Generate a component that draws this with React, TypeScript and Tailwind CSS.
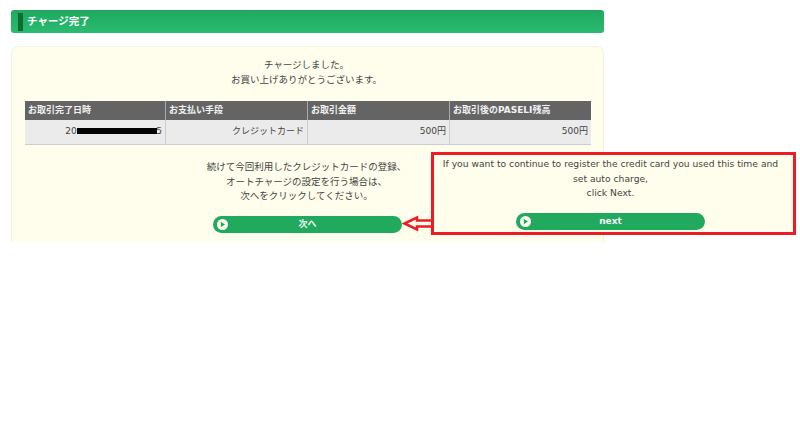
const font = { fontFamily: '"DejaVu Sans", "Noto Sans CJK JP", sans-serif' };

function PlayButton({ label, className }: { label: string; className: string }) {
  return (
    <div className={`relative flex items-center justify-center rounded-full bg-[#21aa5e] text-[9px] font-bold text-[#f4fbf4] ${className}`}>
      <svg className="absolute left-[4px] top-[3px]" width="11" height="11" viewBox="0 0 11 11">
        <circle cx="5.5" cy="5.5" r="5.5" fill="#fffff0" />
        <path d="M3.8 2.8 L8 5.5 L3.8 8.2 Z" fill="#21aa5e" />
      </svg>
      {label}
    </div>
  );
}

const headers = ["お取引完了日時", "お支払い手段", "お取引金額", "お取引後のPASELI残高"];
const widths = ["w-[141px]", "w-[142px]", "w-[142px]", "w-[141px]"];

export default function App() {
  return (
    <div className="relative h-[422px] w-[800px] overflow-hidden bg-white text-[#444]" style={font}>
      <div className="ml-[11px] w-[593px] pt-[10px]">
        <div className="flex h-[23px] items-center rounded-[3px] bg-gradient-to-b from-[#20a85f] to-[#2abb71] pl-[7px]">
          <div className="h-[18px] w-[5px] bg-[#0b6b35]" />
          <span className="ml-[4px] text-[10.5px] font-bold text-white">チャージ完了</span>
        </div>
        <div className="mt-[13px] h-[196px] rounded-t-[7px] border-x border-t border-[#f6f3d8] bg-[#fffeec] px-[13px] pt-[10px]">
          <div className="pr-[2px] text-center text-[9.5px] leading-[15px]">
            <p>チャージしました。</p>
            <p>お買い上げありがとうございます。</p>
          </div>
          <div className="mt-[14px] w-[566px] text-[9px]">
            <div className="flex h-[19px] bg-[#646464] font-bold text-[#f2f2f2]">
              {headers.map((h, i) => (
                <div key={h} className={`flex items-center border-r border-[#aaa] pl-[3px] last:border-r-0 ${widths[i]}`}>{h}</div>
              ))}
            </div>
            <div className="flex h-[25px] border-b border-[#ccc] bg-[#ebebeb]">
              <div className={`relative flex items-center justify-end border-r border-[#ccc] pr-[3px] ${widths[0]}`}>
                <span className="w-[91px] text-left">20</span>
                <span>5</span>
                <div className="absolute left-[52px] top-[8px] h-[6px] w-[80px] bg-black" />
              </div>
              <div className={`flex items-center justify-end border-r border-[#ccc] pr-[3px] ${widths[1]}`}>クレジットカード</div>
              <div className={`flex items-center justify-end border-r border-[#ccc] pr-[3px] ${widths[2]}`}>500円</div>
              <div className={`flex items-center justify-end pr-[3px] ${widths[3]}`}>500円</div>
            </div>
          </div>
          <div className="mt-[15px] pr-[2px] text-center text-[9.5px] leading-[14.5px]">
            <p>続けて今回利用したクレジットカードの登録、</p>
            <p>オートチャージの設定を行う場合は、</p>
            <p>次へをクリックしてください。</p>
          </div>
          <PlayButton label="次へ" className="ml-[188px] mt-[12.5px] h-[17px] w-[189px]" />
        </div>
      </div>

      <div className="absolute left-[431px] top-[152px] flex h-[83px] w-[365px] flex-col items-center border-[3px] border-[#ed1c24] bg-[#fffeec] pr-[6px] pt-[2px] text-center text-[9.2px] leading-[14.5px] whitespace-nowrap">
        <p>If you want to continue to register the credit card you used this time and</p>
        <p>set auto charge,</p>
        <p>click Next.</p>
        <PlayButton label="next" className="mt-[12px] h-[17px] w-[189px]" />
      </div>

      <svg className="absolute left-[402px] top-[214px]" width="30" height="19" viewBox="0 0 30 19">
        <path d="M30 6.5 L15 6.5 L15 3.5 L2.5 9.5 L15 15.5 L15 12.5 L30 12.5" fill="none" stroke="#ed1c24" strokeWidth="2.5" />
      </svg>
    </div>
  );
}
